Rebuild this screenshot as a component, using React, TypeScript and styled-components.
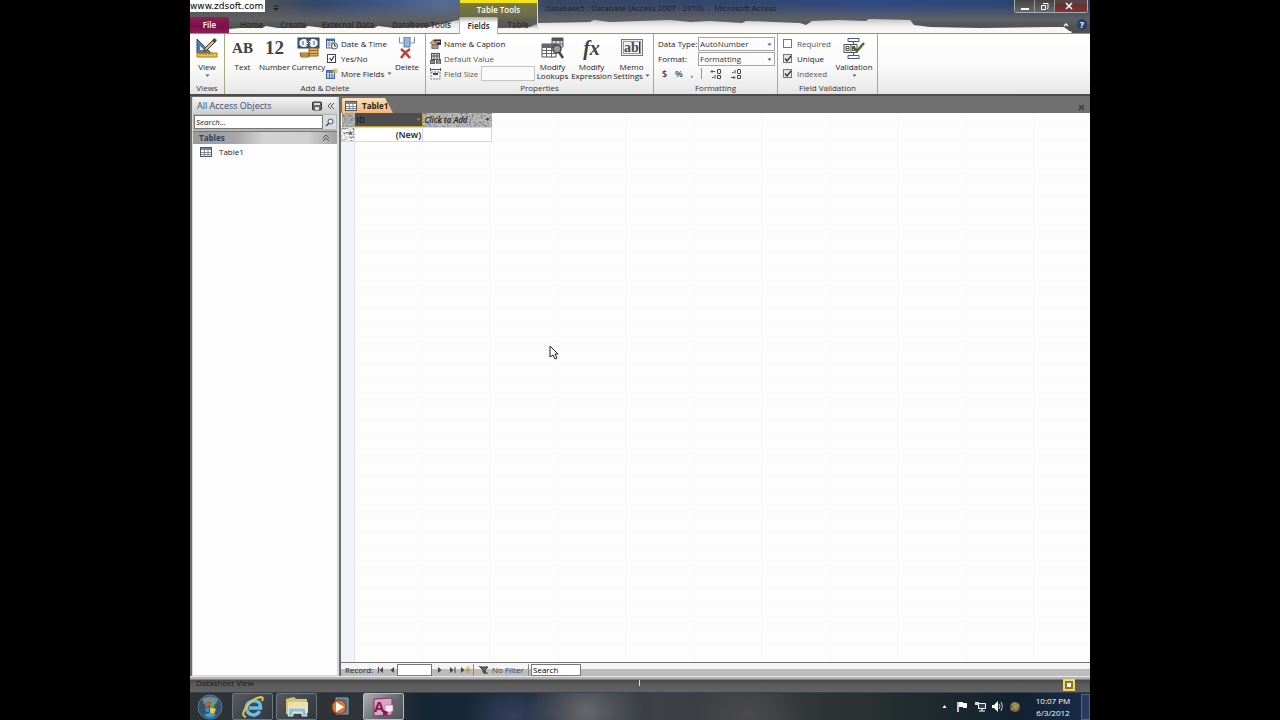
import React from "react";
import styled, { createGlobalStyle, css } from "styled-components";

const GlobalStyle = createGlobalStyle`
  *, *::before, *::after { box-sizing: border-box; }
  body { margin: 0; background: #000; font-family: "Open Sans", "Noto Sans", sans-serif; font-size: 8px; line-height: 10px; color: #222; }
  button, input, select { font: inherit; color: inherit; margin: 0; padding: 0; }
  button { background: none; border: 0; cursor: default; }
  svg { display: block; flex: none; }
  h1, h2, p { margin: 0; font: inherit; }
`;

const Page = styled.div`
  display: grid;
  grid-template-columns: 190px minmax(0, 1fr) 190px;
  min-height: 100vh;
  background: #000;
`;
const Screen = styled.main`
  grid-column: 2;
  display: flex;
  flex-direction: column;
  background: #5d5d5d;
  overflow: hidden;
`;

/* Title bar and ribbon tabs */
const Top = styled.header`
  position: relative;
  height: 33px;
  background:
    linear-gradient(180deg, transparent 4px, #606163 20px, #4f5052 27px),
    linear-gradient(90deg, #515356 0, #4c5058 9%, #33466b 14%, #3f5887 22%, #566d96 28%, #46536d 36%, #394763 40%, #34466c 60%, #2f4a85 76%, #2a4472 92%, #2c4569 100%);
`;
const Smear = styled.svg`
  position: absolute;
  inset: 0;
  width: 100%;
  height: 33px;
`;
const Watermark = styled.span`
  position: absolute;
  left: 0;
  top: 0;
  width: 75px;
  height: 12px;
  background: #fff;
  color: #000;
  font: 9px/12px "DejaVu Sans", sans-serif;
  white-space: nowrap;
`;
const QuickArrow = styled.button`
  position: absolute;
  left: 82px;
  top: 5px;
`;
const WindowTitle = styled.h1`
  position: absolute;
  left: 355px;
  top: 3px;
  color: #1c1f26;
  white-space: pre;
`;
const Context = styled.div`
  position: absolute;
  left: 270px;
  top: 0;
  width: 78px;
  height: 30px;
  border-top: 3px solid #f4e31a;
  border-right: 1px solid #e0e0b0;
  background: linear-gradient(180deg, #7b7b3a, #6d6e48 12px, #5c5c54 18px, transparent 26px);
  color: #fff;
  text-align: center;
  line-height: 14px;
  font-weight: 600;
`;
const Tabs = styled.nav`
  position: absolute;
  inset: 17px 0 0 0;
  display: flex;
  align-items: stretch;
`;
const Tab = styled.button<{ $w: number; $kind?: "file" | "active" }>`
  width: ${(p) => p.$w}px;
  height: 16px;
  color: #2e2e2e;
  font-weight: 600;
  white-space: nowrap;
  ${(p) => p.$kind === "file" && css`
    background: linear-gradient(180deg, #8c2057, #7a0e47 60%, #8d1f5b);
    border-radius: 0 2px 0 0;
    color: #fff;
  `}
  ${(p) => p.$kind === "active" && css`
    height: 17px;
    background: linear-gradient(180deg, #b9b9b6, #fff 5px);
    border: 1px solid #b9b97c;
    border-bottom: 0;
    border-radius: 2px 2px 0 0;
    color: #222;
    z-index: 1;
  `}
`;
const WindowButtons = styled.div`
  position: absolute;
  right: 2px;
  top: 0;
  display: flex;
  height: 13px;
  border: 1px solid #a9a9a9;
  border-top: 0;
  border-radius: 0 0 3px 3px;
`;
const WindowButton = styled.button<{ $close?: boolean }>`
  display: grid;
  place-items: center;
  width: ${(p) => (p.$close ? 32 : 20)}px;
  padding-right: ${(p) => (p.$close ? 4 : 0)}px;
  border-right: ${(p) => (p.$close ? 0 : 1)}px solid #999;
  background: ${(p) => (p.$close ? "linear-gradient(180deg,#564848,#6a3030 50%,#7d3733)" : "linear-gradient(180deg,#444,#66686a)")};
`;
const HelpTools = styled.div`
  position: absolute;
  right: 3px;
  top: 19px;
  display: flex;
  align-items: center;
  gap: 8px;
`;
const Help = styled.button`
  width: 10px;
  height: 11px;
  border-radius: 5px;
  background: #23406e;
  color: #fff;
  font-size: 9px;
  font-weight: 700;
  line-height: 11px;
`;

/* Ribbon */
const Ribbon = styled.section`
  display: flex;
  height: 61px;
  border-top: 1px solid #98985a;
  background: linear-gradient(180deg, #fff, #fafafa 55%, #e6e6e6);
`;
const Group = styled.section<{ $w: number }>`
  display: flex;
  flex-direction: column;
  flex: none;
  width: ${(p) => p.$w}px;
  border-right: 1px solid #a9a97e;
`;
const GroupBody = styled.div<{ $pad?: number }>`
  display: flex;
  height: 48px;
  padding: 2px 0 0 ${(p) => p.$pad ?? 0}px;
`;
const GroupName = styled.h2`
  line-height: 12px;
  text-align: center;
  color: #333;
`;
const Big = styled.button<{ $w: number }>`
  display: flex;
  flex-direction: column;
  align-items: center;
  flex: none;
  width: ${(p) => p.$w}px;
  height: 46px;
  line-height: 9px;
  white-space: nowrap;
`;
const BigIcon = styled.span<{ $size?: number }>`
  display: flex;
  align-items: center;
  justify-content: center;
  height: 24px;
  margin-bottom: 2px;
  color: #414141;
  font: 700 ${(p) => p.$size ?? 15}px/24px "Liberation Serif", serif;
`;
const BigArrow = styled.span`
  padding-top: 3px;
`;
const WithArrow = styled.span`
  display: flex;
  align-items: center;
  gap: 2px;
`;
const Stack = styled.div<{ $w: number }>`
  display: flex;
  flex-direction: column;
  flex: none;
  width: ${(p) => p.$w}px;
  height: 46px;
`;
const Small = styled.button<{ $dim?: boolean }>`
  display: flex;
  align-items: center;
  gap: 3px;
  height: 15px;
  color: ${(p) => (p.$dim ? "#555" : "#222")};
  white-space: nowrap;
`;
const FieldLine = styled.label<{ $dim?: boolean; $gap?: number }>`
  display: flex;
  align-items: center;
  gap: ${(p) => p.$gap ?? 3}px;
  height: 15px;
  color: ${(p) => (p.$dim ? "#555" : "#222")};
  white-space: nowrap;
`;
const SizeInput = styled.input`
  width: 54px;
  height: 15px;
  border: 1px solid #c4c4c4;
  background: #fafafa;
`;
const SelectWrap = styled.span`
  position: relative;
  flex: none;
  width: 77px;
  margin-left: auto;
  svg { position: absolute; right: 3px; top: 6px; pointer-events: none; }
`;
const Select = styled.select`
  display: block;
  width: 100%;
  height: 14px;
  padding: 0 1px;
  appearance: none;
  border: 1px solid #a5a5a5;
  border-radius: 0;
  background: #fcfcfc;
  color: #333;
`;
const FormatRow = styled.div`
  display: flex;
  align-items: center;
  justify-content: space-between;
  height: 15px;
  padding: 0 33px 0 4px;
  color: #444;
  button { font-size: 9px; font-weight: 600; }
`;
const Rule = styled.i`
  width: 1px;
  height: 11px;
  background: #999;
`;
const Check = styled.input`
  appearance: none;
  width: 9px;
  height: 9px;
  border: 1px solid #777;
  background: #fff;
  &:checked { background: #e4e4e4; }
`;
const CheckWrap = styled.span`
  position: relative;
  display: flex;
  svg { position: absolute; left: 1px; top: 1px; pointer-events: none; }
`;

/* Work area */
const Work = styled.div`
  display: flex;
  flex: 1;
  min-height: 0;
  border-top: 2px solid #4c4c4c;
  background: #6c6c6c;
`;
const Nav = styled.aside`
  display: flex;
  flex-direction: column;
  width: 147px;
  flex: none;
  margin: 1px 2px 0 2px;
  border: solid #d9d9d9;
  border-width: 0 2px 1px 1px;
  background: #fdfdfd;
`;
const NavHead = styled.div`
  display: flex;
  align-items: center;
  gap: 5px;
  height: 17px;
  padding: 0 2px 0 4px;
  background: linear-gradient(180deg, #f4f4f4, #cdcdcd);
  color: #3a4c70;
  font-size: 9px;
  h2 { flex: 1; white-space: nowrap; }
`;
const NavSearch = styled.form`
  display: flex;
  height: 17px;
  padding: 1px 1px 2px 1px;
  background: #b5b5b5;
  input { flex: 1; min-width: 0; padding: 0 1px; border: 1px solid #777; background: #fff; font-style: italic; }
  input::placeholder { color: #111; opacity: 1; }
  button { display: grid; place-items: center; width: 13px; background: #dcdcdc; }
`;
const NavSection = styled.button`
  position: relative;
  display: flex;
  align-items: center;
  justify-content: space-between;
  height: 13px;
  padding: 0 6px;
  background: linear-gradient(90deg, #9a9a9a, #a8a8a8 30%, #d4d4d4 50%, #cfcfcf 80%, #a0a0a0);
  border-top: 1px solid #777;
  color: #25416b;
  font-weight: 700;
`;
const NavItem = styled.a`
  display: flex;
  align-items: center;
  gap: 7px;
  height: 16px;
  padding-left: 7px;
  color: #222;
  text-decoration: none;
`;
const Doc = styled.section`
  display: flex;
  flex-direction: column;
  flex: 1;
  min-width: 0;
`;
const DocTabs = styled.div`
  display: flex;
  align-items: flex-end;
  justify-content: space-between;
  height: 17px;
  padding: 0 5px 0 1px;
  background: #707070;
`;
const DocTab = styled.button`
  display: flex;
  align-items: center;
  gap: 5px;
  width: 51px;
  height: 15px;
  padding-left: 3px;
  background: linear-gradient(180deg, #fde0b8, #f3b777);
  clip-path: polygon(1px 0, 43px 0, 51px 15px, 0 15px, 0 1px);
  color: #2b2118;
  font-weight: 700;
`;
const CloseTab = styled.button`
  height: 12px;
`;
const Sheet = styled.div`
  flex: 1;
  background:
    linear-gradient(90deg, #f2f2fb 13px, #e4e4ef 13px 14px, transparent 14px),
    repeating-linear-gradient(180deg, transparent 0 13px, #fafafa 13px 14px),
    repeating-linear-gradient(90deg, transparent 0 67px, #f7f7f7 67px 68px) 14px 0,
    #fdfdfd;
`;
const Grid = styled.table`
  table-layout: fixed;
  width: 150px;
  border-collapse: collapse;
  th, td { height: 14px; padding: 0 1px; line-height: 13px; white-space: nowrap; overflow: hidden; }
  td { border: 1px solid #d8d8d8; background: #fff; text-align: right; font-size: 9px; font-weight: 600; }
`;
const HeadCell = styled.th<{ $tone: string; $ink: string; $slant?: boolean }>`
  position: relative;
  background: ${(p) => p.$tone};
  color: ${(p) => p.$ink};
  text-align: left;
  font-weight: 600;
  font-style: ${(p) => (p.$slant ? "italic" : "normal")};
`;
const SelectedCell = styled(HeadCell)`
  box-shadow: inset -1px -1px #b9a23c;
`;
const CellBody = styled.span`
  position: relative;
  display: flex;
  align-items: center;
  justify-content: space-between;
  padding: 0 1px;
`;
const RowMark = styled.td`
  position: relative;
`;
const Grain = styled.svg`
  position: absolute;
  inset: 0;
  width: 100%;
  height: 100%;
  pointer-events: none;
`;
const RecordBar = styled.div`
  display: flex;
  align-items: center;
  height: 14px;
  padding-left: 4px;
  border-top: 1px solid #777;
  background: linear-gradient(180deg, #f4f4f4 6px, #bcbcbc 6px);
  color: #222;
  white-space: nowrap;
`;
const RecordButton = styled.button<{ $w: number }>`
  display: grid;
  place-items: center;
  width: ${(p) => p.$w}px;
  height: 12px;
`;
const RecordLabel = styled.label`
  width: 29px;
`;
const RecordInput = styled.input<{ $w: number }>`
  width: ${(p) => p.$w}px;
  height: 12px;
  padding: 0 1px;
  border: 1px solid #777;
  background: #fff;
  &::placeholder { color: #000; opacity: 1; }
`;
const Filter = styled.button`
  display: flex;
  align-items: center;
  gap: 3px;
  width: 56px;
  height: 12px;
  margin: 0 2px 0 1px;
  padding-left: 5px;
  border: solid #888;
  border-width: 0 1px;
  color: #444;
`;

/* Status bar and taskbar */
const Status = styled.footer`
  display: flex;
  align-items: center;
  justify-content: space-between;
  position: relative;
  height: 16px;
  padding: 0 15px 0 6px;
  border-top: 1px solid #e8e8e8;
  background: linear-gradient(180deg, #b4b4b4 2px, #474747 3px, #5a5a5a 7px, #626262);
`;
const StatusText = styled.span`
  height: 10px;
  line-height: 6px;
  color: #1c1c1c;
`;
const ViewButton = styled.button`
  display: grid;
  place-items: center;
  width: 12px;
  height: 12px;
  border: 2px solid #f2d568;
  background: #8b7430;
`;
const StatusTick = styled.i`
  position: absolute;
  left: calc(50% - 1px);
  top: 3px;
  width: 1px;
  height: 6px;
  background: #ddd;
`;
const Taskbar = styled.footer`
  display: flex;
  align-items: stretch;
  height: 28px;
  border-top: 1px solid #3b4148;
  background:
    radial-gradient(ellipse 60px 50px at 44% 70%, #67686c, transparent),
    radial-gradient(ellipse 50px 40px at 36% 90%, #34405c, transparent),
    radial-gradient(ellipse 60px 40px at 62% 80%, #4b4b4e, transparent),
    linear-gradient(90deg, #2e3237 0, #303438 22%, #142534 26%, #1d2a3a 38%, #3f4146 52%, #34383b 66%, #252e2e 78%, #11212f 92%, #1a2c49 100%);
`;
const TaskButton = styled.button<{ $w: number; $on?: boolean; $active?: boolean }>`
  display: grid;
  place-items: center;
  width: ${(p) => p.$w}px;
  height: 27px;
  margin-right: 3px;
  ${(p) => p.$on && css`
    border: 1px solid ${p.$active ? "#b8bcc0" : "#70767e"};
    border-radius: 2px;
    background: ${p.$active ? "linear-gradient(135deg,#aeb1b5,#62676e 60%,#50565e)" : "linear-gradient(135deg,#555a60,#30363f)"};
  `}
`;
const Tray = styled.div`
  display: flex;
  align-items: center;
  gap: 6px;
  margin-left: auto;
  color: #fff;
`;
const Clock = styled.time`
  width: 48px;
  padding-left: 4px;
  text-align: center;
  line-height: 12px;
`;
const ShowDesktop = styled.button`
  width: 9px;
  height: 26px;
  border: 1px solid #55667e;
  background: #263d60;
`;
const Pointer = styled.svg`
  position: fixed;
  left: calc(50% - 91px);
  top: 345px;
  pointer-events: none;
`;

const Arrow = ({ color = "#555" }: { color?: string }) => (
  <svg width="5" height="3" viewBox="0 0 5 3"><path d="M0.5 0.5h4L2.5 2.8z" fill={color} /></svg>
);

const Noise = ({ id, seed }: { id: string; seed: number }) => (
  <Grain aria-hidden="true">
    <filter id={id} x="0" y="0" width="100%" height="100%">
      <feTurbulence type="fractalNoise" baseFrequency="0.45" numOctaves="2" seed={seed} />
      <feColorMatrix values="0 0 0 0 .2  0 0 0 0 .2  0 0 0 0 .2  3 0 0 0 -1.3" />
    </filter>
    <rect width="100%" height="100%" filter={`url(#${id})`} />
  </Grain>
);

const TableIcon = ({ size = 12 }: { size?: number }) => (
  <svg width={size} height={size - 2} viewBox="0 0 12 10">
    <rect x=".5" y=".5" width="11" height="9" fill="#fff" stroke="#4a5568" />
    <path d="M1 1h10v2H1z" fill="#7d8797" />
    <path d="M1 5.5h10M1 7.5h10M4.3 2v8M8 2v8" stroke="#6b7480" strokeWidth=".8" />
  </svg>
);

const ViewIcon = () => (
  <svg width="22" height="22" viewBox="0 0 22 22">
    <path d="M1 2v14h14z" fill="#527fae" stroke="#2c4c75" />
    <path d="M4 9v4h4z" fill="#f3f7fb" />
    <path d="M1 16h20v4H1z" fill="#f2c14b" stroke="#a87816" />
    <path d="M4 16v2m3-2v2m3-2v2m3-2v2m3-2v2" stroke="#80591a" strokeWidth=".7" />
    <path d="M8 14l1-3 9-9 2 2-9 9z" fill="#e6b65a" stroke="#3f3d38" />
    <path d="M16 4l2-3 3 2-2 3z" fill="#474747" />
  </svg>
);
const CurrencyIcon = () => (
  <svg width="23" height="22" viewBox="0 0 23 22">
    <rect x="1" y="1" width="21" height="10" fill="#3f5878" stroke="#2f435f" />
    <path d="M2.500 4l3-2h3l2 2h2l2-2h3l3 2v4l-3 2h-3l-2-2h-2l-2 2h-3l-3-2z" fill="#f5f7fa" />
    <path d="M11.500 2v8M13.500 3.500h-3.500v2h3v2H9.500M6 4v4M17 4v4" stroke="#3d5573" fill="none" />
    <path d="M12 11h9v8h-9zM3 16h9v4H4z" fill="#ddb25b" stroke="#8b6320" />
    <path d="M12 13.500h9M12 16.500h9M3 18h9" stroke="#8b6320" strokeWidth=".9" />
  </svg>
);
const DeleteIcon = () => (
  <svg width="18" height="22" viewBox="0 0 18 22">
    <path d="M1.500 0v6h4M16.500 0v6h-4" fill="none" stroke="#7792b5" />
    <path d="M6 0h6v10H6z" fill="#97b5dc" stroke="#547bb0" />
    <path d="M3 12q4 3 9 9M12 12q-5 3-9 9" stroke="#c43d34" strokeWidth="2.500" fill="none" />
  </svg>
);
const DateIcon = () => (
  <svg width="12" height="12" viewBox="0 0 12 12">
    <rect x=".5" y="1" width="8" height="9" fill="#fff" stroke="#43699b" />
    <path d="M1 1h8v2H1z" fill="#43699b" /><path d="M1 5h7M1 7h7M3 3v7M6 3v7" stroke="#637590" strokeWidth=".7" />
    <circle cx="8.500" cy="8" r="3" fill="#f5f5f5" stroke="#555" /><path d="M8.500 6v2h1.500" stroke="#333" fill="none" />
  </svg>
);
const Tick = () => (
  <svg width="8" height="8" viewBox="0 0 8 8"><path d="M1 3.500l2 2.500L7 1" fill="none" stroke="#333" strokeWidth="1.300" /></svg>
);
const YesNoIcon = () => (
  <svg width="12" height="12" viewBox="0 0 12 12"><rect x="1.500" y="1.500" width="8" height="8" fill="#fff" stroke="#444" /><path d="M3.500 5l2 2.500 2.500-4.500" fill="none" stroke="#333" strokeWidth="1.200" /></svg>
);
const MoreIcon = () => (
  <svg width="12" height="12" viewBox="0 0 12 12">
    <rect x=".5" y="2.500" width="8" height="8" fill="#fff" stroke="#3f6291" /><path d="M1 3h7v2H1z" fill="#5c84b8" /><path d="M1 7h7M1 9h7M3.500 4v7M6 4v7" stroke="#496b97" strokeWidth=".8" />
    <path d="M9 0v6M6 3h6M7 1l4 4m0-4L7 5" stroke="#e4b13b" />
  </svg>
);
const CaptionIcon = () => (
  <svg width="11" height="12" viewBox="0 0 12 12"><path d="M4 1h8v6H4z" fill="#333" /><path d="M6 3h5v1H6z" fill="#eee" /><path d="M0 5l3-3 5 3-2 3-3-1z" fill="#d6a15d" stroke="#6d4c28" strokeWidth=".6" /><path d="M2 7h7v4H2z" fill="#999" stroke="#555" strokeWidth=".7" /></svg>
);
const DefaultIcon = () => (
  <svg width="11" height="12" viewBox="0 0 11 12"><rect x="1.500" y=".5" width="8" height="6" fill="#ddd" stroke="#555" /><path d="M2 3h8M4 1v5M7 1v5" stroke="#555" /><path d="M0 7h5v4H0zM6 6h5v5H6z" fill="#5d5d5d" /><path d="M1 9h3M7 8h3M7 10h3" stroke="#eee" strokeWidth=".7" /></svg>
);
const SizeIcon = () => (
  <svg width="11" height="12" viewBox="0 0 11 12"><path d="M1 1.500h9M.5 0v3m10-3v3" stroke="#555" /><rect x="1" y="4" width="9" height="7" fill="none" stroke="#777" strokeDasharray="2 1" /><path d="M3 6h5" stroke="#444" strokeWidth="2" /></svg>
);
const LookupIcon = () => (
  <svg width="23" height="22" viewBox="0 0 23 22">
    <path d="M11 1h11v9H11z" fill="#ddd" stroke="#555" /><path d="M11 1h11v3H11z" fill="#555" /><path d="M12 7h10M15 4v6M19 4v6" stroke="#666" />
    <path d="M1 7h14v13H1z" fill="#fafafa" stroke="#555" /><path d="M1 7h14v4H1z" fill="#666" /><path d="M1 13.500h14M1 16.500h14M5.500 8v12M10.500 8v12" stroke="#666" />
    <circle cx="16" cy="12" r="4" fill="#999" stroke="#444" strokeWidth="1.500" /><path d="M18 15l4 6" stroke="#444" strokeWidth="2.500" />
  </svg>
);
const MemoIcon = () => (
  <svg width="22" height="18" viewBox="0 0 22 18"><rect x=".5" y=".5" width="21" height="16" fill="#eee" stroke="#777" /><rect x="2.500" y="2.500" width="17" height="12" fill="#f2f2f2" stroke="#999" /><text x="3" y="13" fontFamily="Liberation Serif, serif" fontSize="14" fontWeight="700" fill="#4b4b4b">ab</text><path d="M18.500 3v11" stroke="#333" /></svg>
);
const ValidationIcon = () => (
  <svg width="22" height="23" viewBox="0 0 22 23">
    <path d="M5 1.500h11v3H5zM5 18.500h11v3H5z" fill="#fff" stroke="#45597a" />
    <path d="M10.500 5v3m0 7v3" stroke="#45597a" />
    <path d="M1 7.500h13v8H1z" fill="#f5f5f5" stroke="#555" /><path d="M3 9.500h3v4H3zM3 11.500h3M8 8v7M12 9.500H9.500v4H12" fill="none" stroke="#555" />
    <path d="M10 10l4 4 7-8" fill="none" stroke="#3f6e2c" strokeWidth="2.500" />
  </svg>
);
const DecimalIcon = ({ flip }: { flip?: boolean }) => (
  <svg width="12" height="12" viewBox="0 0 12 12">
    <path d={flip ? "M1 9.500h4M3.500 8L5 9.500 3.500 11" : "M1 3.500h4M2.500 2L1 3.500 2.500 5"} fill="none" stroke="#555" />
    <path d="M7.500 2v3M10.500 2v3M7.500 1.500h3M7.500 5.500h3M7.500 7.500v3h3v-3z" fill="none" stroke="#444" />
    <path d={flip ? "M2 4.500h1.500M5 5.500V2" : "M2 9.500h1.500M5 10.500V7"} fill="none" stroke="#444" />
  </svg>
);
const Nib = ({ d, extra }: { d: string; extra?: boolean }) => (
  <svg width="11" height="8" viewBox="0 0 11 8"><path d={d} fill="#444" />{extra && <path d="M8 0v8M5 4h6M6 1.500l4 5m0-5l-4 5" stroke="#c59b34" strokeWidth=".9" />}</svg>
);

export default function App() {
  return (
    <Page>
      <GlobalStyle />
      <Screen>
        <Top>
          <Smear viewBox="0 0 900 33" preserveAspectRatio="none" aria-hidden="true">
            <defs>
              <linearGradient id="smear" gradientUnits="userSpaceOnUse" x1="0" y1="20" x2="0" y2="33"><stop offset="0" stopColor="#c9c9c9" /><stop offset=".4" stopColor="#ececec" /><stop offset="1" stopColor="#fff" /></linearGradient>
            </defs>
            <path d="M39 29L50 28 72 28 76 26 88 28 115 28 118 26 134 28 184 28 188 26 204 28 240 27 250 24 258 23 264 21 270 20V33H39zM308 33V28L340 27 348 23 400 22 404 20 420 22 480 20 500 22 520 21 552 23 556 21 585 22 610 23 616 25 622 21 648 20 676 21 679 19 720 20 724 25 740 27 790 28 860 27 874 27 882 33z" fill="url(#smear)" />
            <path d="M39 32h843" stroke="#f6f6d8" />
          </Smear>
          <Watermark>www.zdsoft.com</Watermark>
          <QuickArrow aria-label="Customize Quick Access Toolbar"><svg width="8" height="7" viewBox="0 0 8 7"><path d="M1.500 1h5" stroke="#222" /><path d="M1 3h6L4 6z" fill="#222" /></svg></QuickArrow>
          <Context>Table Tools</Context>
          <WindowTitle>{"Database5 : Database (Access 2007 - 2010)  -  Microsoft Access"}</WindowTitle>
          <WindowButtons>
            <WindowButton aria-label="Minimize"><svg width="8" height="9"><path d="M0 7h8" stroke="#fff" strokeWidth="2" /></svg></WindowButton>
            <WindowButton aria-label="Restore"><svg width="9" height="9"><path d="M3 1.500h5v5H7M1.500 3.500h4v4h-4z" fill="none" stroke="#fff" /></svg></WindowButton>
            <WindowButton aria-label="Close" $close><svg width="8" height="8"><path d="M1 1l6 6M7 1L1 7" stroke="#fff" strokeWidth="1.500" /></svg></WindowButton>
          </WindowButtons>
          <Tabs>
            <Tab $w={39} $kind="file">File</Tab>
            <Tab $w={45}>Home</Tab>
            <Tab $w={38}>Create</Tab>
            <Tab $w={72}>External Data</Tab>
            <Tab $w={75}>Database Tools</Tab>
            <Tab $w={39} $kind="active">Fields</Tab>
            <Tab $w={40}>Table</Tab>
          </Tabs>
          <HelpTools>
            <button aria-label="Minimize the ribbon"><svg width="6" height="6"><path d="M1 4l2-2 2 2" fill="none" stroke="#fff" strokeWidth="1.300" /></svg></button>
            <Help aria-label="Help">?</Help>
          </HelpTools>
        </Top>

        <Ribbon>
          <Group $w={35}>
            <GroupBody><Big $w={34}><BigIcon><ViewIcon /></BigIcon>View<BigArrow><Arrow /></BigArrow></Big></GroupBody>
            <GroupName>Views</GroupName>
          </Group>
          <Group $w={201}>
            <GroupBody $pad={2}>
              <Big $w={31}><BigIcon>AB</BigIcon>Text</Big>
              <Big $w={33}><BigIcon $size={19}>12</BigIcon>Number</Big>
              <Big $w={35}><BigIcon><CurrencyIcon /></BigIcon>Currency</Big>
              <Stack $w={65}>
                <Small><DateIcon />Date &amp; Time</Small>
                <Small><YesNoIcon />Yes/No</Small>
                <Small><MoreIcon />More Fields<Arrow /></Small>
              </Stack>
              <Big $w={32}><BigIcon><DeleteIcon /></BigIcon>Delete</Big>
            </GroupBody>
            <GroupName>Add &amp; Delete</GroupName>
          </Group>
          <Group $w={228}>
            <GroupBody $pad={4}>
              <Stack $w={104}>
                <Small><CaptionIcon />Name &amp; Caption</Small>
                <Small $dim><DefaultIcon />Default Value</Small>
                <FieldLine $dim><SizeIcon />Field Size<SizeInput aria-label="Field Size" /></FieldLine>
              </Stack>
              <Big $w={37}><BigIcon><LookupIcon /></BigIcon>Modify<br />Lookups</Big>
              <Big $w={41}><BigIcon $size={20}><i>fx</i></BigIcon>Modify<br />Expression</Big>
              <Big $w={39}><BigIcon><MemoIcon /></BigIcon>Memo<WithArrow>Settings<Arrow /></WithArrow></Big>
            </GroupBody>
            <GroupName>Properties</GroupName>
          </Group>
          <Group $w={124}>
            <GroupBody $pad={4}>
              <Stack $w={117}>
                <FieldLine $gap={0}>Data Type:<SelectWrap><Select><option>AutoNumber</option></Select><Arrow /></SelectWrap></FieldLine>
                <FieldLine $gap={0}>Format:<SelectWrap><Select><option>Formatting</option></Select><Arrow /></SelectWrap></FieldLine>
                <FormatRow>
                  <button>$</button><button>%</button><button>,</button><Rule />
                  <button aria-label="Increase Decimals"><DecimalIcon /></button>
                  <button aria-label="Decrease Decimals"><DecimalIcon flip /></button>
                </FormatRow>
              </Stack>
            </GroupBody>
            <GroupName>Formatting</GroupName>
          </Group>
          <Group $w={100}>
            <GroupBody $pad={5}>
              <Stack $w={50}>
                <FieldLine $dim $gap={5}><Check type="checkbox" />Required</FieldLine>
                <FieldLine $gap={5}><CheckWrap><Check type="checkbox" defaultChecked /><Tick /></CheckWrap>Unique</FieldLine>
                <FieldLine $dim $gap={5}><CheckWrap><Check type="checkbox" defaultChecked /><Tick /></CheckWrap>Indexed</FieldLine>
              </Stack>
              <Big $w={42}><BigIcon><ValidationIcon /></BigIcon>Validation<BigArrow><Arrow /></BigArrow></Big>
            </GroupBody>
            <GroupName>Field Validation</GroupName>
          </Group>
        </Ribbon>

        <Work>
          <Nav>
            <NavHead>
              <h2>All Access Objects</h2>
              <svg width="10" height="10" viewBox="0 0 10 10"><rect x=".5" y="1" width="9" height="8" rx="1" fill="#666" stroke="#333" /><path d="M2 2h6v2H2zM3 6h4v3H3z" fill="#ddd" /></svg>
              <button aria-label="Collapse pane"><svg width="8" height="8"><path d="M4 1L1 4l3 3M7 1L4 4l3 3" stroke="#555" fill="none" /></svg></button>
            </NavHead>
            <NavSearch>
              <input aria-label="Search objects" placeholder="Search..." />
              <button type="button" aria-label="Search"><svg width="9" height="9"><circle cx="5.500" cy="3.500" r="2.500" fill="#eef" stroke="#2e4f80" /><path d="M4 5L1 8" stroke="#2e4f80" strokeWidth="1.500" /></svg></button>
            </NavSearch>
            <NavSection>Tables<svg width="9" height="8"><path d="M1 4l3-3 3 3M1 7l3-3 3 3" fill="none" stroke="#555" /></svg></NavSection>
            <NavItem href="#table1"><TableIcon />Table1</NavItem>
          </Nav>

          <Doc>
            <DocTabs>
              <DocTab><TableIcon />Table1</DocTab>
              <CloseTab aria-label="Close Table1"><svg width="7" height="7"><path d="M1 1l5 5M6 1L1 6" stroke="#3d3d3d" strokeWidth="1.500" /></svg></CloseTab>
            </DocTabs>
            <Sheet>
              <Grid>
                <colgroup><col width="13" /><col width="68" /><col width="69" /></colgroup>
                <thead>
                  <tr>
                    <HeadCell $tone="#b4b4b4" $ink="#444"><Noise id="grain-a" seed={3} /></HeadCell>
                    <SelectedCell $tone="#4e4e4e" $ink="#1c1c1c"><CellBody>ID<Arrow color="#888" /></CellBody></SelectedCell>
                    <HeadCell $tone="#bcbcbc" $ink="#222" $slant><Noise id="grain-b" seed={8} /><CellBody>Click to Add<Arrow color="#222" /></CellBody></HeadCell>
                  </tr>
                </thead>
                <tbody>
                  <tr>
                    <RowMark><Noise id="grain-c" seed={5} />*</RowMark>
                    <td>(New)</td>
                    <td />
                  </tr>
                </tbody>
              </Grid>
            </Sheet>
            <RecordBar>
              <RecordLabel htmlFor="record">Record:</RecordLabel>
              <RecordButton $w={13} aria-label="First record"><Nib d="M3 1h1v6H3zM8 1v6L4.500 4z" /></RecordButton>
              <RecordButton $w={10} aria-label="Previous record"><Nib d="M7 1v6L3.500 4z" /></RecordButton>
              <RecordInput $w={35} id="record" />
              <RecordButton $w={14} aria-label="Next record"><Nib d="M4 1v6l3.500-3z" /></RecordButton>
              <RecordButton $w={12} aria-label="Last record"><Nib d="M3 1v6l3.500-3zM7.500 1h1v6h-1z" /></RecordButton>
              <RecordButton $w={14} aria-label="New record"><Nib d="M1 1v6l3.500-3z" extra /></RecordButton>
              <Filter><svg width="10" height="8"><path d="M1 1h8L6 4v4L4 6V4zM0 0l9 8" stroke="#333" fill="#777" /></svg>No Filter</Filter>
              <RecordInput $w={50} aria-label="Search records" placeholder="Search" />
            </RecordBar>
          </Doc>
        </Work>

        <Status>
          <StatusText>Datasheet View</StatusText>
          <StatusTick />
          <ViewButton aria-label="Datasheet View"><svg width="6" height="6"><path d="M1 1h4v4H1z" fill="#fff" /></svg></ViewButton>
        </Status>
        <Taskbar>
          <TaskButton $w={39} aria-label="Start">
            <svg width="26" height="26" viewBox="0 0 26 26"><circle cx="13" cy="13" r="12" fill="#35536b" stroke="#64798a" /><path d="M5 5q8-5 16 0l-2 5q-6-4-12 0z" fill="#6f8b9b" /><path d="M8 8l5-1v5l-5 1z" fill="#c95c30" /><path d="M14 7l4 2-1 5-4-2z" fill="#77a147" /><path d="M8 14l4-1v5H9z" fill="#3c8fc9" /><path d="M13 13l6 2-2 5-4-1z" fill="#f1c34b" /><path d="M7 21q6-4 12 0-6 5-12 0z" fill="#36a6d8" /></svg>
          </TaskButton>
          <TaskButton $w={41} $on aria-label="Internet Explorer">
            <svg width="24" height="24" viewBox="0 0 24 24"><path d="M18.500 16q-2 4-6 4-7-1-7-7t7-7 7 7H8" fill="none" stroke="#66bfe9" strokeWidth="3.500" /><path d="M5 22Q0 21 4 14 11 3 20 2q3 0 1 4" fill="none" stroke="#e8c243" strokeWidth="2" /></svg>
          </TaskButton>
          <TaskButton $w={41} $on aria-label="Windows Explorer">
            <svg width="26" height="23" viewBox="0 0 26 23"><path d="M2 4l8-2 2 2h11v15H2z" fill="#d8c27a" /><path d="M4 7h20v11H4z" fill="#efdfa5" /><path d="M5 13h16l2 8h-5v-4H9v4H4z" fill="#8dbfd8" stroke="#d7edf5" /></svg>
          </TaskButton>
          <TaskButton $w={40} aria-label="Media Player">
            <svg width="20" height="20" viewBox="0 0 20 20"><path d="M6 1h12v16H6z" fill="#52718c" stroke="#8fa8b8" /><circle cx="9" cy="10" r="7" fill="#d97835" stroke="#7d3e1a" /><path d="M6 5v10l8-5z" fill="#fff" /></svg>
          </TaskButton>
          <TaskButton $w={41} $on $active aria-label="Microsoft Access">
            <svg width="22" height="22" viewBox="0 0 22 22"><path d="M1 3l18-1v17l-18 1z" fill="#d9a5c4" stroke="#8c2f63" /><text x="1" y="16" fontFamily="Open Sans, sans-serif" fontSize="15" fontWeight="700" fill="#8a1552">A</text><path d="M12 9h8v6q-4 3-8 0z" fill="#f6eaf1" stroke="#b1628f" strokeWidth=".6" /><path d="M10 14l5 2-1 3h-4z" fill="#8a1552" /></svg>
          </TaskButton>
          <Tray>
            <svg width="5" height="3" viewBox="0 0 5 3"><path d="M.5 3h4L2.500 0z" fill="#fff" /></svg>
            <svg width="16" height="11"><path d="M5 1v10" stroke="#fff" strokeWidth="1.500" /><path d="M6 1h4v1h4v5h-4V6H6z" fill="#fff" /></svg>
            <svg width="11" height="11"><path d="M3.500 2.500h7v5h-7zM7 8v2M4 10h6" stroke="#fff" fill="#345" /><path d="M0 1h4v3H0z" fill="#ddd" /></svg>
            <svg width="11" height="11"><path d="M0 4h2l4-4v11L2 7H0z" fill="#fff" /><path d="M7 3q2 2 0 5M9 1q3 4 0 9" stroke="#ccc" fill="none" /></svg>
            <svg width="12" height="12"><circle cx="6" cy="6" r="5" fill="#8c5a3e" /><path d="M2 3l4-2 4 4-3 5z" fill="#78975a" /><path d="M2 9l8-6" stroke="#c08a4e" strokeWidth="1.500" /></svg>
            <Clock>10:07 PM<br />6/3/2012</Clock>
            <ShowDesktop aria-label="Show desktop" />
          </Tray>
        </Taskbar>
      </Screen>
      <Pointer width="10" height="15" viewBox="0 0 10 15" aria-hidden="true"><path d="M1 1v11l3-2 2 4 2-1-2-4h3z" fill="#fff" stroke="#222" /></Pointer>
    </Page>
  );
}
